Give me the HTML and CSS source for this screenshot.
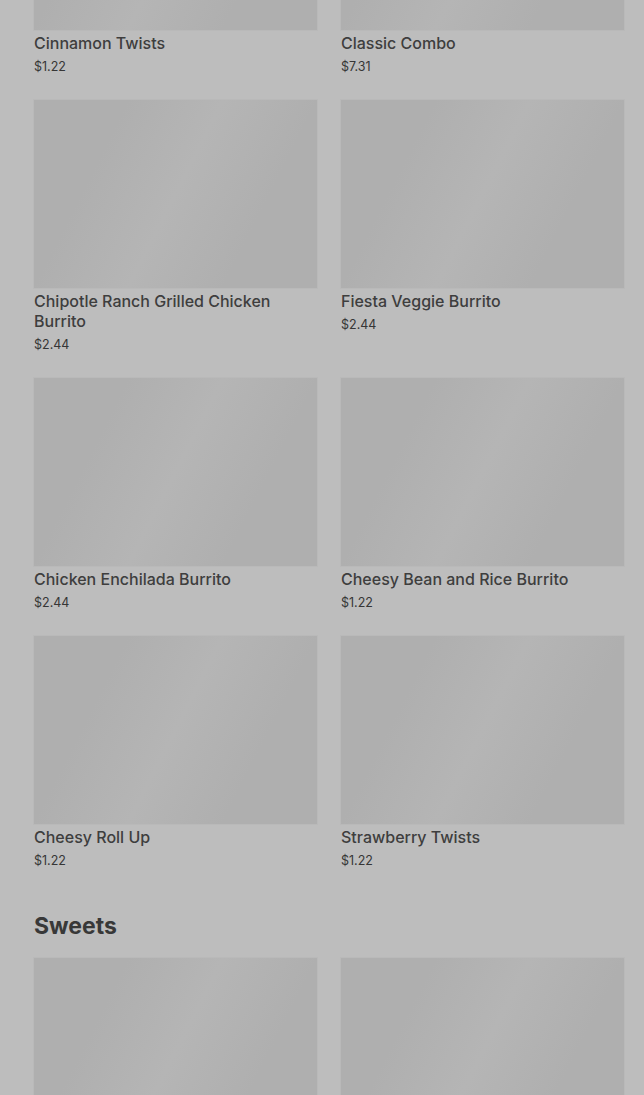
FILE: index.html
```html
<!DOCTYPE html>
<html lang="en">

<head>
    <meta charset="UTF-8">
    <meta name="viewport" content="width=device-width, initial-scale=1.0">
    <title>Menu</title>
    <link rel="stylesheet" href="styles.css">
</head>

<body>

    <div class="menu">
        <section class="menu-section scrolled">
            <div class="item-grid">
                <div class="item">
                    <div class="item-image"></div>
                    <div class="item-name">Cinnamon Twists</div>
                    <div class="item-price">$1.22</div>
                </div>
                <div class="item">
                    <div class="item-image"></div>
                    <div class="item-name">Classic Combo</div>
                    <div class="item-price">$7.31</div>
                </div>
                <div class="item">
                    <div class="item-image"></div>
                    <div class="item-name">Chipotle Ranch Grilled Chicken Burrito</div>
                    <div class="item-price">$2.44</div>
                </div>
                <div class="item">
                    <div class="item-image"></div>
                    <div class="item-name">Fiesta Veggie Burrito</div>
                    <div class="item-price">$2.44</div>
                </div>
                <div class="item">
                    <div class="item-image"></div>
                    <div class="item-name">Chicken Enchilada Burrito</div>
                    <div class="item-price">$2.44</div>
                </div>
                <div class="item">
                    <div class="item-image"></div>
                    <div class="item-name">Cheesy Bean and Rice Burrito</div>
                    <div class="item-price">$1.22</div>
                </div>
                <div class="item">
                    <div class="item-image"></div>
                    <div class="item-name">Cheesy Roll Up</div>
                    <div class="item-price">$1.22</div>
                </div>
                <div class="item">
                    <div class="item-image"></div>
                    <div class="item-name">Strawberry Twists</div>
                    <div class="item-price">$1.22</div>
                </div>
            </div>
        </section>

        <section class="menu-section">
            <h2 class="section-title">Sweets</h2>
            <div class="item-grid">
                <div class="item">
                    <div class="item-image"></div>
                </div>
                <div class="item">
                    <div class="item-image"></div>
                </div>
            </div>
        </section>
    </div>

</body>

</html>
```

FILE: styles.css
```css
body {
    margin: 0;
    background: #bdbdbd;
    font-family: Inter, "Noto Sans", sans-serif;
    color: #3b3b3b;
    overflow: hidden;
}

.menu {
    padding: 0 20px 0 34px;
}

/* page is scrolled: the first row of images is mostly out of view */
.scrolled {
    margin-top: -158px;
}

.menu-section {
    margin-bottom: 40px;
}

.section-title {
    margin: 0 0 16px;
    font-size: 23px;
    line-height: 32px;
    font-weight: 700;
    color: #383838;
}

.item-grid {
    display: grid;
    grid-template-columns: 1fr 1fr;
    column-gap: 24px;
    row-gap: 24px;
}

.item-image {
    height: 188px;
    background: linear-gradient(117deg, #afafaf 25%, #b5b5b5 50%, #afafaf 75%);
    box-shadow: 0 0 0 1px #b9b9b9;
}

.item-name {
    margin-top: 3px;
    font-size: 16px;
    line-height: 20px;
    font-weight: 500;
    color: #3e3e3e;
}

.item-price {
    margin-top: 5px;
    font-size: 12.5px;
    line-height: 18px;
    color: #363636;
}
```
